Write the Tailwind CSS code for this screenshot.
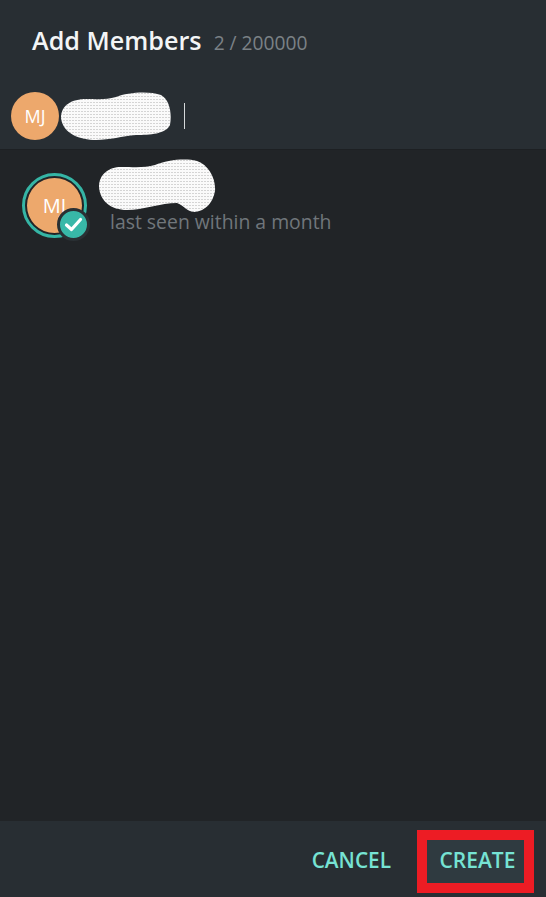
<!DOCTYPE html>
<html lang="en">
  <head>
    <meta charset="UTF-8" />
    <title>Add Members</title>
    <script src="https://cdn.jsdelivr.net/npm/@tailwindcss/browser@4"></script>
  </head>
  <body class="bg-[#212427] font-['Open_Sans',sans-serif]">
    <div class="w-[546px] h-[897px] flex flex-col overflow-hidden">
      <!-- Header -->
      <div class="h-[150px] shrink-0 bg-[#282e33] border-b border-[#1d2023] flex flex-col">
        <div class="h-[92px] pl-[32px] pt-[22px] flex items-baseline">
          <span class="text-[25.2px] leading-[36px] font-semibold text-[#f3f5f6]">Add Members</span>
          <span class="ml-[12px] text-[19.2px] leading-[36px] text-[#7b8186]">2 / 200000</span>
        </div>
        <div class="flex items-center pl-[11px] h-[48px]">
          <div class="w-[48px] h-[48px] rounded-full bg-[#eda86c] flex items-center justify-center text-white text-[18px]">MJ</div>
          <svg class="ml-[1px] w-[112px] h-[48px]" viewBox="0 0 112 48">
            <defs>
              <pattern id="scrib1" width="3" height="3" patternUnits="userSpaceOnUse">
                <rect width="3" height="3" fill="#fafafa" />
                <rect y="1" width="2" height="1" fill="#d4d4d4" />
              </pattern>
            </defs>
            <path d="M1 26C1 13 12 7 26 7C38 7 46 8 56 5C68 0 90 -1 101 3C110 8 112 22 110 33C106 42 90 43 76 43C62 44 50 48 36 48C20 48 3 42 1 26Z" fill="url(#scrib1)" />
          </svg>
          <div class="ml-[12px] w-px h-[26px] bg-[#d5d8da]"></div>
        </div>
      </div>

      <!-- Selected contact -->
      <div class="flex-1 relative">
        <div class="flex pl-[22px] pt-[23px]">
          <div class="relative w-[65px] h-[65px] shrink-0 rounded-full border-[3px] border-[#35b5a5] p-[2px]">
            <div class="w-full h-full rounded-full bg-[#eda86c] flex items-center justify-center text-white text-[20px]">MJ</div>
            <div class="absolute left-[32px] top-[32px] w-[33px] h-[33px] rounded-full bg-[#38b8a8] border-[3px] border-[#2a3034] flex items-center justify-center">
              <svg class="w-[23px] h-[23px]" viewBox="0 0 23 23" fill="none">
                <path d="M4.5 12L9.5 16.5L18.5 6.5" stroke="#fff" stroke-width="3.2" stroke-linecap="round" stroke-linejoin="round" />
              </svg>
            </div>
          </div>
          <div class="relative -top-[14px] ml-[12px]">
            <svg class="w-[118px] h-[54px]" viewBox="0 0 118 54">
              <defs>
                <pattern id="scrib2" width="3" height="3" patternUnits="userSpaceOnUse">
                  <rect width="3" height="3" fill="#fafafa" />
                  <rect y="1" width="2" height="1" fill="#d4d4d4" />
                </pattern>
              </defs>
              <path d="M0 28C0 15 10 8 22 8C36 8 46 9 56 6C68 1 86 -1 98 2C110 6 117 20 116 32C114 44 106 52 96 53C88 53 86 47 78 44C62 44 44 51 28 51C12 51 1 42 0 28Z" fill="url(#scrib2)" />
            </svg>
            <div class="-mt-[4px] ml-[11px] text-[19.4px] leading-[26px] text-[#70767b]">last seen within a month</div>
          </div>
        </div>
      </div>

      <!-- Footer -->
      <div class="h-[76px] shrink-0 bg-[#282e33] flex items-center justify-end pr-[12px] pt-[4px]">
        <span class="mr-[26px] pb-[1px] text-[20.8px] font-semibold text-[#76e3d4]">CANCEL</span>
        <div class="w-[117px] h-[63px] pb-[1px] pl-[4px] border-[10px] border-[#ed1c24] bg-[#2f3a40] flex items-center justify-center">
          <span class="text-[21px] font-semibold text-[#76e3d4]">CREATE</span>
        </div>
      </div>
    </div>
  </body>
</html>
